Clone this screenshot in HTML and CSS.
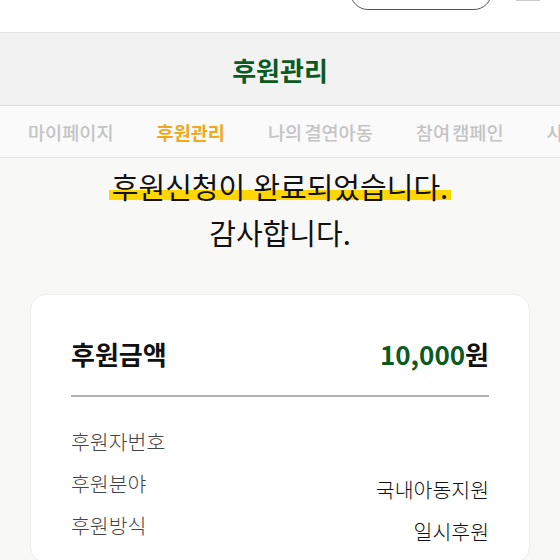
FILE: index.html
```html
<!DOCTYPE html>
<html lang="ko">
<head>
<meta charset="utf-8">
<link rel="stylesheet" href="styles.css">
</head>
<body>
<header class="topbar">
  <div class="pill"></div>
  <div class="menu-bar"></div>
</header>
<div class="page-title"><h1>후원관리</h1></div>
<nav class="tabs">
  <span class="tab">마이페이지</span>
  <span class="tab active">후원관리</span>
  <span class="tab">나의 결연아동</span>
  <span class="tab">참여 캠페인</span>
  <span class="tab">사</span>
</nav>
<main class="content">
  <div class="message">
    <p class="line1"><span class="hl">후원신청이 완료되었습니다.</span></p>
    <p class="line2">감사합니다.</p>
  </div>
  <section class="card">
    <div class="amount-row">
      <span class="amount-label">후원금액</span>
      <span class="amount-value"><em>10,000</em>원</span>
    </div>
    <div class="divider"></div>
    <div class="info">
      <div class="info-row"><span class="label">후원자번호</span><span class="value"></span></div>
      <div class="info-row"><span class="label">후원분야</span><span class="value">국내아동지원</span></div>
      <div class="info-row"><span class="label">후원방식</span><span class="value">일시후원</span></div>
    </div>
  </section>
</main>
</body>
</html>
```
FILE: styles.css
```css
* { box-sizing: border-box; }
html, body { margin: 0; padding: 0; }
body {
  width: 560px;
  height: 560px;
  overflow: hidden;
  font-family: "Noto Sans CJK KR", "Noto Sans", sans-serif;
  background: #f8f8f7;
  color: #111;
}
.topbar {
  height: 33px;
  background: #fff;
  border-bottom: 1px solid #e4e4e4;
  position: relative;
}
.pill {
  position: absolute;
  left: 350px;
  top: -30px;
  width: 142px;
  height: 40px;
  border: 1px solid #555;
  border-radius: 18px;
}
.menu-bar {
  position: absolute;
  left: 516px;
  top: 0;
  width: 24px;
  height: 1px;
  background: #ccc;
}
.page-title {
  height: 73px;
  background: #f2f2f2;
  border-bottom: 1px solid #dcdcdc;
  display: flex;
  align-items: center;
  justify-content: center;
}
.page-title h1 {
  margin: 0;
  font-size: 26px;
  font-weight: 700;
  color: #0b5a22;
}
.tabs {
  height: 52px;
  background: #fafafa;
  border-bottom: 1px solid #e6e6e6;
  display: flex;
  align-items: center;
  gap: 43px;
  padding-left: 28px;
  white-space: nowrap;
  overflow: hidden;
}
.tab {
  font-size: 18.6px;
  font-weight: 500;
  color: #c4c4c4;
  flex: none;
  word-spacing: -3px;
}
.tab.active { color: #f0a81e; font-weight: 700; }
.content {
  padding: 5px 30px 0;
}
.message {
  text-align: center;
  color: #111;
}
.message p {
  margin: 0;
  font-size: 29px;
  line-height: 46px;
  font-weight: 400;
}
.hl {
  background: linear-gradient(transparent 60%, #ffd600 60%, #ffd600 84%, transparent 84%);
  border-radius: 6px;
  padding: 0 3px;
}
.card {
  margin-top: 39px;
  background: #fff;
  border: 1px solid #efefed;
  border-radius: 16px;
  padding: 28px 40px 20px;
}
.amount-row {
  display: flex;
  justify-content: space-between;
  align-items: center;
  height: 60px;
}
.amount-label {
  font-size: 26px;
  font-weight: 700;
  color: #111;
}
.amount-value {
  font-size: 26px;
  font-weight: 700;
  color: #111;
}
.amount-value em {
  font-style: normal;
  color: #0b5a22;
}
.divider {
  margin-top: 12px;
  height: 2px;
  background: #b0b0b0;
}
.info {
  padding-top: 27px;
  display: flex;
  flex-direction: column;
  gap: 8px;
}
.info-row {
  display: flex;
  justify-content: space-between;
  height: 34px;
}
.label {
  font-size: 20.5px;
  font-weight: 300;
  color: #444;
  line-height: 34px;
}
.value {
  font-size: 20.5px;
  font-weight: 300;
  color: #111;
  line-height: 34px;
  padding-top: 6px;
}
```
